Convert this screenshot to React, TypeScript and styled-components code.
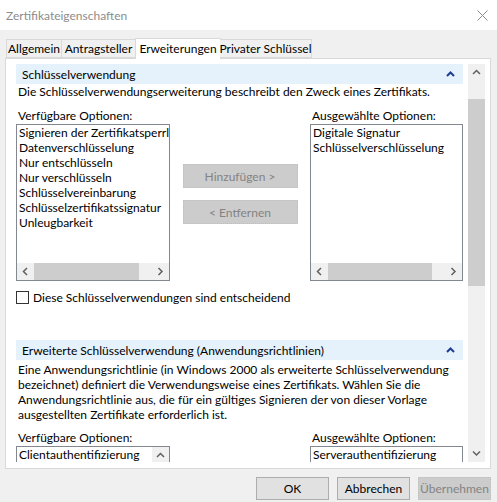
import styled, { createGlobalStyle } from 'styled-components';

const GlobalStyle = createGlobalStyle`
  html, body {
    margin: 0;
    padding: 0;
    width: 497px;
    height: 502px;
    overflow: hidden;
    background: #f0f0f0;
  }
  body {
    font-family: Lato, 'Noto Sans', sans-serif;
    font-size: 12px;
    color: #000;
  }
`;

const Window = styled.div`
  width: 497px;
  height: 502px;
  display: flex;
  flex-direction: column;
  background: #f0f0f0;
`;

const TitleBar = styled.div`
  height: 30px;
  flex: none;
  display: flex;
  align-items: center;
  justify-content: space-between;
  padding: 0 9px 0 6px;
  background: #fff;
`;

const Title = styled.span`
  color: #8c8c8c;
  font-size: 12px;
`;

const Body = styled.div`
  flex: 1;
  display: flex;
  flex-direction: column;
  padding: 7px 6px 0 5px;
`;

const TabStrip = styled.div`
  display: flex;
  align-items: flex-end;
  height: 21px;
  padding-left: 1px;
  position: relative;
  z-index: 1;
`;

const Tab = styled.div<{ $active?: boolean; $width: number }>`
  box-sizing: border-box;
  width: ${({ $width }) => $width}px;
  height: ${({ $active }) => ($active ? 21 : 19)}px;
  margin-bottom: ${({ $active }) => ($active ? -1 : 0)}px;
  margin-left: ${({ $active }) => ($active ? -1 : 0)}px;
  margin-right: ${({ $active }) => ($active ? -1 : 0)}px;
  border: 1px solid #d9d9d9;
  border-bottom: ${({ $active }) => ($active ? 'none' : '1px solid #d9d9d9')};
  border-left-width: ${({ $active }) => ($active ? 1 : 0)}px;
  &:first-child {
    border-left-width: 1px;
  }
  background: ${({ $active }) => ($active ? '#fff' : '#f0f0f0')};
  display: flex;
  align-items: center;
  justify-content: center;
  padding-bottom: ${({ $active }) => ($active ? 2 : 0)}px;
  white-space: nowrap;
`;

const TabPanel = styled.div`
  height: 411px;
  box-sizing: border-box;
  border: 1px solid #d9d9d9;
  background: #fff;
  display: flex;
  gap: 5px;
  padding: 5px 5px 5px 10px;
`;

const Content = styled.div`
  width: 447px;
  height: 398px;
  overflow: hidden;
  display: flex;
  flex-direction: column;
`;

const SectionHeader = styled.div<{ $top?: number }>`
  flex: none;
  height: 20px;
  margin-top: ${({ $top }) => $top ?? 0}px;
  display: flex;
  align-items: center;
  justify-content: space-between;
  padding: 0 8px 0 6px;
  background: #e5f1fb;
`;

const Paragraph = styled.p<{ $top?: number }>`
  margin: ${({ $top }) => $top ?? 0}px 0 0;
  padding-left: 2px;
  line-height: 15px;
  white-space: nowrap;
`;

const OptionsGrid = styled.div<{ $top: number }>`
  flex: none;
  margin-top: ${({ $top }) => $top}px;
  display: grid;
  grid-template-columns: 154px 115px 153px;
  column-gap: 12px;
  justify-content: space-between;
`;

const OptionColumn = styled.div`
  display: flex;
  flex-direction: column;
  min-width: 0;
`;

const Label = styled.div`
  line-height: 15px;
  padding-left: 2px;
  margin-bottom: 1px;
  white-space: nowrap;
`;

const ListBox = styled.div<{ $height: number }>`
  box-sizing: border-box;
  height: ${({ $height }) => $height}px;
  border: 1px solid #828790;
  background: #fff;
  display: flex;
  flex-direction: column;
  overflow: hidden;
`;

const ListRow = styled.div`
  flex: 1;
  display: flex;
  min-height: 0;
`;

const ListItems = styled.div`
  flex: 1;
  min-width: 0;
  overflow: hidden;
`;

const ListItem = styled.div`
  line-height: 15px;
  padding-left: 2px;
  white-space: nowrap;
`;

const HScroll = styled.div`
  flex: none;
  height: 17px;
  display: flex;
  background: #f0f0f0;
`;

const VScrollSmall = styled.div`
  flex: none;
  width: 17px;
  display: flex;
  flex-direction: column;
  background: #f0f0f0;
`;

const ArrowButton = styled.div`
  flex: none;
  width: 17px;
  height: 17px;
  display: flex;
  align-items: center;
  justify-content: center;
`;

const HTrack = styled.div`
  flex: 1;
  display: flex;
`;

const HThumb = styled.div<{ $size: number }>`
  width: ${({ $size }) => $size}%;
  background: #cdcdcd;
`;

const ButtonColumn = styled.div`
  display: flex;
  flex-direction: column;
  gap: 12px;
  padding-top: 56px;
`;

const SideButton = styled.div`
  height: 24px;
  box-sizing: border-box;
  border: 1px dotted #bfbfbf;
  background: #cccccc;
  color: #838383;
  display: flex;
  align-items: center;
  justify-content: center;
`;

const CheckRow = styled.label`
  flex: none;
  margin-top: 10px;
  display: flex;
  align-items: center;
  gap: 4px;
  height: 13px;
`;

const CheckBox = styled.span`
  width: 13px;
  height: 13px;
  box-sizing: border-box;
  border: 1px solid #333;
  background: #fff;
`;

const VScroll = styled.div`
  width: 17px;
  height: 398px;
  display: flex;
  flex-direction: column;
  background: #f0f0f0;
`;

const VTrack = styled.div`
  flex: 1;
  display: flex;
  flex-direction: column;
`;

const VThumb = styled.div<{ $offset: number; $size: number }>`
  margin-top: ${({ $offset }) => $offset}px;
  height: ${({ $size }) => $size}px;
  background: #cdcdcd;
`;

const Footer = styled.div`
  display: flex;
  justify-content: flex-end;
  gap: 8px;
  padding-top: 8px;
`;

const DialogButton = styled.div<{ $disabled?: boolean }>`
  width: 73px;
  height: 23px;
  box-sizing: border-box;
  border: 1px ${({ $disabled }) => ($disabled ? 'dotted #bfbfbf' : 'solid #adadad')};
  background: ${({ $disabled }) => ($disabled ? '#cccccc' : '#e1e1e1')};
  color: ${({ $disabled }) => ($disabled ? '#838383' : '#000')};
  display: flex;
  align-items: center;
  justify-content: center;
`;

type Dir = 'up' | 'down' | 'left' | 'right';

const chevronPoints: Record<Dir, string> = {
  up: '1,5 4.5,1.5 8,5',
  down: '1,1.5 4.5,5 8,1.5',
  left: '5,1 1.5,4.5 5,8',
  right: '1.5,1 5,4.5 1.5,8',
};

const Chevron = ({ dir, color = '#606060', width = 1.5 }: { dir: Dir; color?: string; width?: number }) => {
  const horiz = dir === 'left' || dir === 'right';
  return (
    <svg width={horiz ? 7 : 9} height={horiz ? 9 : 7} viewBox={horiz ? '0 0 7 9' : '0 0 9 7'}>
      <polyline points={chevronPoints[dir]} fill="none" stroke={color} strokeWidth={width} />
    </svg>
  );
};

const CloseIcon = () => (
  <svg width="11" height="11" viewBox="0 0 11 11">
    <path d="M0.5 0.5 L10.5 10.5 M10.5 0.5 L0.5 10.5" stroke="#8c8c8c" strokeWidth="1" />
  </svg>
);

const tabs = [
  { label: 'Allgemein', width: 56 },
  { label: 'Antragsteller', width: 74 },
  { label: 'Erweiterungen', width: 86, active: true },
  { label: 'Privater Schlüssel', width: 92 },
];

const available = [
  'Signieren der Zertifikatsperrliste',
  'Datenverschlüsselung',
  'Nur entschlüsseln',
  'Nur verschlüsseln',
  'Schlüsselvereinbarung',
  'Schlüsselzertifikatssignatur',
  'Unleugbarkeit',
];

const selected = ['Digitale Signatur', 'Schlüsselverschlüsselung'];

const HorizontalBar = ({ thumb }: { thumb: number }) => (
  <HScroll>
    <ArrowButton>
      <Chevron dir="left" />
    </ArrowButton>
    <HTrack>
      <HThumb $size={thumb} />
    </HTrack>
    <ArrowButton>
      <Chevron dir="right" />
    </ArrowButton>
  </HScroll>
);

const App = () => (
  <Window>
    <GlobalStyle />
    <TitleBar>
      <Title>Zertifikateigenschaften</Title>
      <CloseIcon />
    </TitleBar>
    <Body>
      <TabStrip>
        {tabs.map((t) => (
          <Tab key={t.label} $active={t.active} $width={t.width}>
            {t.label}
          </Tab>
        ))}
      </TabStrip>
      <TabPanel>
        <Content>
          <SectionHeader>
            <span>Schlüsselverwendung</span>
            <Chevron dir="up" color="#1c3f94" width={2} />
          </SectionHeader>
          <Paragraph>Die Schlüsselverwendungserweiterung beschreibt den Zweck eines Zertifikats.</Paragraph>
          <OptionsGrid $top={9}>
            <OptionColumn>
              <Label>Verfügbare Optionen:</Label>
              <ListBox $height={157}>
                <ListRow>
                  <ListItems>
                    {available.map((item) => (
                      <ListItem key={item}>{item}</ListItem>
                    ))}
                  </ListItems>
                </ListRow>
                <HorizontalBar thumb={89} />
              </ListBox>
            </OptionColumn>
            <ButtonColumn>
              <SideButton>Hinzufügen &gt;</SideButton>
              <SideButton>&lt; Entfernen</SideButton>
            </ButtonColumn>
            <OptionColumn>
              <Label>Ausgewählte Optionen:</Label>
              <ListBox $height={157}>
                <ListRow>
                  <ListItems>
                    {selected.map((item) => (
                      <ListItem key={item}>{item}</ListItem>
                    ))}
                  </ListItems>
                </ListRow>
                <HorizontalBar thumb={89} />
              </ListBox>
            </OptionColumn>
          </OptionsGrid>
          <CheckRow>
            <CheckBox />
            <span>Diese Schlüsselverwendungen sind entscheidend</span>
          </CheckRow>
          <SectionHeader $top={36}>
            <span>Erweiterte Schlüsselverwendung (Anwendungsrichtlinien)</span>
            <Chevron dir="up" color="#1c3f94" width={2} />
          </SectionHeader>
          <Paragraph $top={2}>
            Eine Anwendungsrichtlinie (in Windows 2000 als erweiterte Schlüsselverwendung
            <br />
            bezeichnet) definiert die Verwendungsweise eines Zertifikats. Wählen Sie die
            <br />
            Anwendungsrichtlinie aus, die für ein gültiges Signieren der von dieser Vorlage
            <br />
            ausgestellten Zertifikate erforderlich ist.
          </Paragraph>
          <OptionsGrid $top={8}>
            <OptionColumn>
              <Label>Verfügbare Optionen:</Label>
              <ListBox $height={60}>
                <ListRow>
                  <ListItems>
                    <ListItem>Clientauthentifizierung</ListItem>
                  </ListItems>
                  <VScrollSmall>
                    <ArrowButton>
                      <Chevron dir="up" />
                    </ArrowButton>
                  </VScrollSmall>
                </ListRow>
              </ListBox>
            </OptionColumn>
            <div />
            <OptionColumn>
              <Label>Ausgewählte Optionen:</Label>
              <ListBox $height={60}>
                <ListItems>
                  <ListItem>Serverauthentifizierung</ListItem>
                </ListItems>
              </ListBox>
            </OptionColumn>
          </OptionsGrid>
        </Content>
        <VScroll>
          <ArrowButton>
            <Chevron dir="up" />
          </ArrowButton>
          <VTrack>
            <VThumb $offset={18} $size={187} />
          </VTrack>
          <ArrowButton>
            <Chevron dir="down" />
          </ArrowButton>
        </VScroll>
      </TabPanel>
      <Footer>
        <DialogButton>OK</DialogButton>
        <DialogButton>Abbrechen</DialogButton>
        <DialogButton $disabled>Übernehmen</DialogButton>
      </Footer>
    </Body>
  </Window>
);

export default App;
